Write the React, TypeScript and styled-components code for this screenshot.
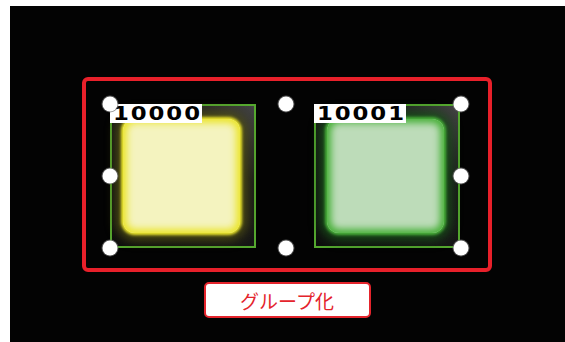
import React from 'react';
import styled, { createGlobalStyle } from 'styled-components';

type LampTone = 'yellow' | 'green';

const tones: Record<LampTone, { core: string; edge: string; halo: string }> = {
    yellow: { core: '#f4f3bf', edge: '#ebe52c', halo: 'rgba(80, 80, 20, 0.95)' },
    green: { core: '#bddcb9', edge: '#49b03a', halo: 'rgba(25, 80, 25, 0.95)' },
};

const handles = [
    { x: 0, y: 0 },
    { x: 50, y: 0 },
    { x: 100, y: 0 },
    { x: 0, y: 50 },
    { x: 100, y: 50 },
    { x: 0, y: 100 },
    { x: 50, y: 100 },
    { x: 100, y: 100 },
];

const App: React.FC = () => {
    return (
        <>
            <GlobalStyle />
            <Canvas>
                <Stage>
                    <GroupFrame>
                        <Selection>
                            <Tile>
                                <Label><LabelText>10000</LabelText></Label>
                                <Lamp $tone="yellow" />
                            </Tile>
                            <Tile>
                                <Label><LabelText>10001</LabelText></Label>
                                <Lamp $tone="green" />
                            </Tile>
                            {handles.map((h, i) => (
                                <Handle key={i} style={{ left: `${h.x}%`, top: `${h.y}%` }} />
                            ))}
                        </Selection>
                    </GroupFrame>
                    <GroupButton type="button">グループ化</GroupButton>
                </Stage>
            </Canvas>
        </>
    );
};

const GlobalStyle = createGlobalStyle`
    html, body {
        margin: 0;
        padding: 0;
        background: #ffffff;
    }
`;

const Canvas = styled.div`
    margin: 6px 0 0 10px;
    width: 555px;
    height: 336px;
    background: #030303;
    overflow: hidden;
`;

const Stage = styled.div`
    display: flex;
    flex-direction: column;
    align-items: center;
    width: 410px;
    padding: 71px 0 0 72px;
`;

const GroupFrame = styled.div`
    box-sizing: border-box;
    width: 410px;
    height: 195px;
    border: 4px solid #e8202a;
    border-radius: 6px;
    padding: 23px 0 0 24px;
`;

const Selection = styled.div`
    position: relative;
    display: flex;
    gap: 58px;
    width: 351px;
`;

const Tile = styled.div`
    position: relative;
    box-sizing: border-box;
    width: 146px;
    height: 144px;
    border: 2px solid #55a82f;
    background: linear-gradient(225deg, #444 0%, #1a1a1a 28%, #0d0d0d 100%);
    padding: 13px 0 0 11px;
`;

const Label = styled.div`
    position: absolute;
    left: -2px;
    top: -2px;
    display: flex;
    align-items: center;
    width: 92px;
    height: 19px;
    background: #ffffff;
    z-index: 1;
`;

const LabelText = styled.span`
    display: inline-block;
    margin-left: 3px;
    font-family: 'DejaVu Sans', sans-serif;
    font-weight: bold;
    font-size: 19px;
    line-height: 19px;
    letter-spacing: 1.6px;
    white-space: nowrap;
    color: #000;
    transform: scaleX(1.2);
    transform-origin: left center;
`;

const Lamp = styled.div<{ $tone: LampTone }>`
    width: 117px;
    height: 114px;
    border-radius: 12px;
    background: ${({ $tone }) => tones[$tone].core};
    box-shadow:
        inset 0 0 7px 4px ${({ $tone }) => tones[$tone].edge},
        0 0 3px 2px ${({ $tone }) => tones[$tone].edge},
        0 0 11px 7px ${({ $tone }) => tones[$tone].halo};
`;

const Handle = styled.div`
    position: absolute;
    width: 15px;
    height: 15px;
    border-radius: 50%;
    background: #ffffff;
    box-shadow: 0 0 0 1px rgba(110, 110, 110, 0.7);
    transform: translate(-50%, -50%);
    z-index: 2;
`;

const GroupButton = styled.button`
    box-sizing: border-box;
    margin-top: 10px;
    width: 167px;
    height: 36px;
    border: 2px solid #e4242c;
    border-radius: 5px;
    background: #ffffff;
    color: #e4242c;
    font-family: 'Noto Sans CJK JP', 'Noto Sans', sans-serif;
    font-size: 19px;
    font-weight: 400;
    padding: 0;
    cursor: pointer;
`;

export default App;
